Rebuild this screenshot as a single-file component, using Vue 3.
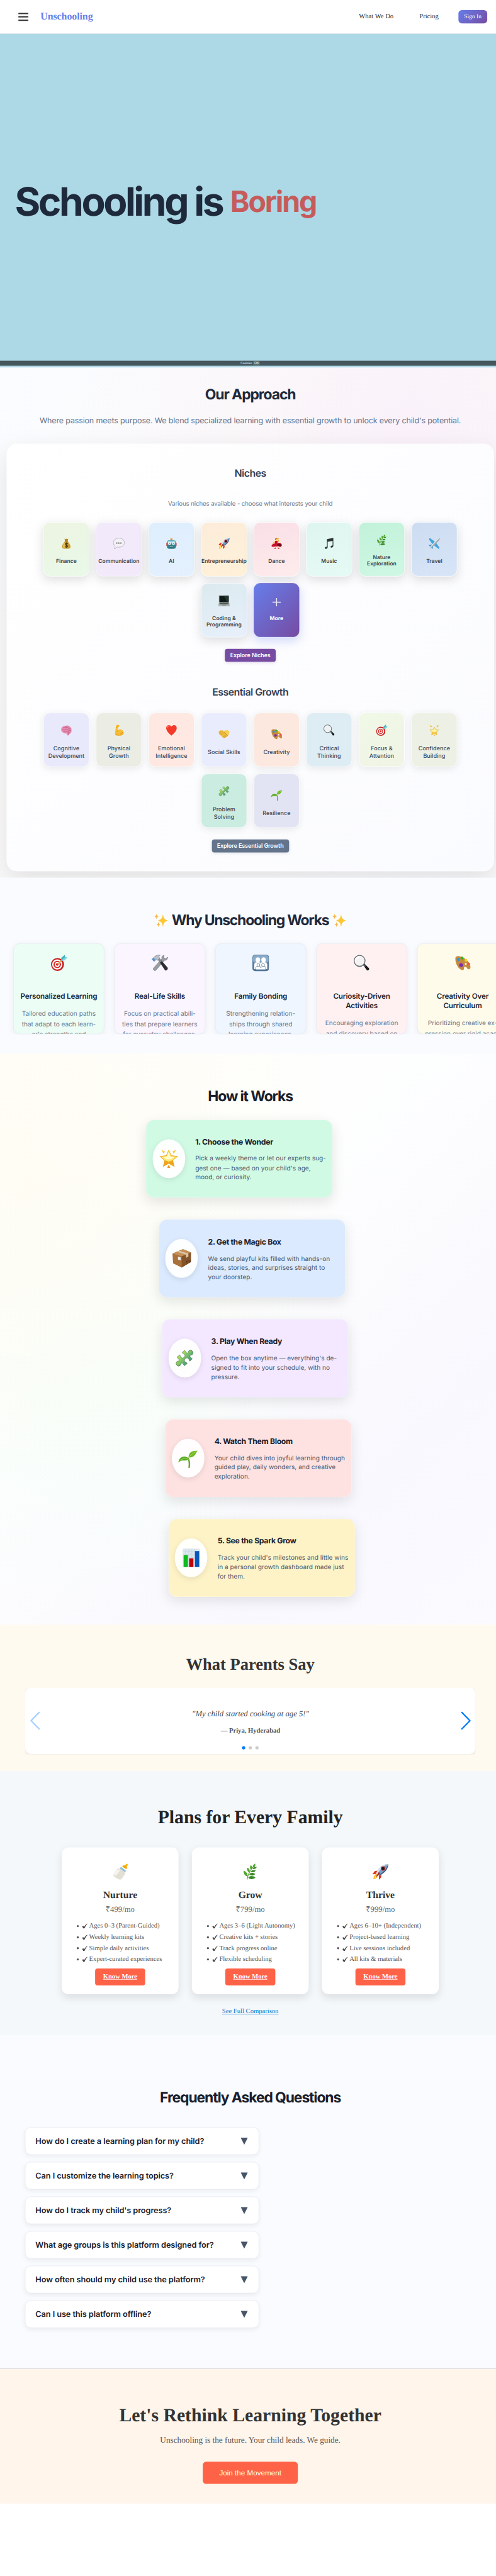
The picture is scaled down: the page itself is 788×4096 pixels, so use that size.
<script setup>
const icons = {
  money: '<path d="M11 3l3 1.500 2-1.500 2 1.500 3-1.500-1.500 6.500h-7z" fill="#b98a24"/><path d="M12.500 9h7c1 4 8 9 8 16 0 4-3 5.500-6 5.500h-11c-3 0-6-1.500-6-5.500 0-7 7-12 8-16z" fill="#c99a2e"/><path d="M13 11c-2 4-6.500 7-6.500 13 0 3 2 4 4 4 5 0 1-10 2.500-17z" fill="#e6bf55"/><path d="M12 8.500h8v2h-8z" fill="#8f6515"/><path d="M20 17.500c-1-2-7.500-2-7.500 1 0 3.500 7.500 1.500 7.500 5.200 0 3.300-7 3.300-8 .3M16 13.500v15" fill="none" stroke="#4d3a0c" stroke-width="1.800"/>',
  chat: '<path d="M16 1.500c8.500 0 15 5.500 15 12.500s-6.500 12.500-15 12.500c-2 0-3.500-.2-5-.7C9 28.500 6.500 30.500 3.500 31c1.500-2 2.200-4.500 2-7.200C2.500 21.500 1 18 1 14 1 7 7.500 1.500 16 1.500z" fill="#f4f1f6" stroke="#b0abb5" stroke-width="1.400"/><circle cx="10.500" cy="15" r="1.600" fill="#333"/><circle cx="16" cy="15" r="1.600" fill="#333"/><circle cx="21.500" cy="15" r="1.600" fill="#333"/>',
  robot: '<circle cx="16" cy="4" r="3" fill="#f7b52c"/><path d="M13 5.500h6v3h-6z" fill="#6b4aa8"/><rect x="2" y="14" width="4" height="9" rx="1.500" fill="#c23a35"/><rect x="26" y="14" width="4" height="9" rx="1.500" fill="#c23a35"/><rect x="4" y="7.500" width="24" height="23" rx="6" fill="#4fa3ad"/><path d="M4 20h24v5c0 4-3 5.500-6 5.500H10c-3 0-6-1.500-6-5.500z" fill="#2f7f8c"/><rect x="6" y="8.500" width="20" height="6" rx="3" fill="#9ad2d6"/><circle cx="10.500" cy="16" r="4" fill="#fff"/><circle cx="21.500" cy="16" r="4" fill="#fff"/><circle cx="10.500" cy="16" r="2" fill="#41c3ea"/><circle cx="21.500" cy="16" r="2" fill="#41c3ea"/><path d="M16 17l2 4h-4z" fill="#d8453c"/><path d="M11 23.500h10v3H11z" fill="#e9f5f5" stroke="#23545c" stroke-width=".8"/><path d="M13.500 23.500v3m2.500-3v3m2.500-3v3" stroke="#23545c" stroke-width=".8"/>',
  rocket: '<path d="M10 14l-5 1-4.500 6 7-.500zM18 22l-1 5.500-4 4 0-7z" fill="#e4331c"/><path d="M8 20c-3 2-5.500 6-5.500 10.500C6 30 9.500 28 12 24z" fill="#ffb21a"/><path d="M8.500 22c-2 1.500-3.500 4-3.500 6.500 2-.5 4-2 5.500-4z" fill="#fff080"/><path d="M31 1.500C22 1.500 14 6 8 18.500L13.500 24C25 18.500 31 10.500 31 1.500z" fill="#7c9fc4"/><path d="M31 1.500C22 1.500 14 6 8 18.500l2.500 2.500C16 10 22 5 31 1.500z" fill="#d5e3ee"/><path d="M31 1.500C31 10 25 18.500 13.500 24l-1.500-1.500C23 17 28 10 31 1.500z" fill="#3d608a"/><circle cx="21" cy="10" r="4.200" fill="#b8252a"/><circle cx="21" cy="10" r="2.700" fill="#1b1c26"/><path d="M13 17l2 2-6.500 7-1-1z" fill="#a3161b"/>',
  dance: '<path d="M18 2c2-2 5 0 4 2l-4 4z" fill="#f5b53a"/><circle cx="15" cy="5.500" r="3.200" fill="#f8c04a"/><path d="M11.500 5c0-4 6-5 7-1.500-2 0-5 0-5.500 4z" fill="#c47718"/><path d="M12 10l-6 4-1 5 2-.500 1-3.500 5-2zM19 10l3-4 1.500 1-3 6z" fill="#f5b53a"/><path d="M12 9h7l-.5 7c3-3 8-2 11 2 1.500 3 .5 6-2 7-4 1-5-2-9-1l-7 1c-4 0-7 1-9-1-1-4 4-7 9-8z" fill="#c9102c"/><path d="M17 18c4-2 9-1 12 0 1.500 3 .5 6-2 7-4 1-7-3-10-7z" fill="#700b1c"/><path d="M12 24l1 6h-2M19 24l2 6h2" fill="none" stroke="#eeb03a" stroke-width="2"/><path d="M9.500 30h4v1.500h-4zM20 29.500h4v1.500h-4z" fill="#b30f25"/>',
  music: '<path d="M10 4.500L27.500 1v21.500c0 3-2 5-5 5s-3.500-4 0-5.200l3-.8V9L12 11.500v14.500c0 3-2 5-5 5s-4-4-.5-5.300L10 24.500z" fill="#2e3335"/>',
  herb: '<path d="M10 31c1-9 6-18 13-26" fill="none" stroke="#5c9a35" stroke-width="1.400"/><g fill="#4fa52e"><path d="M22 8c-2-3 0-6 3.500-7.500C26 4 25.500 7 22 8zM17.500 12c-3-2-2.500-5.500-.5-8.500 3 2 3.500 6 .5 8.500zM14.500 17.500c-4-1-5-5-4.500-9 4 1 6 5 4.500 9zM11 25c-5-.5-8-5-8-11 5 1.500 8.500 6 8 11z"/></g><g fill="#3b8a2a"><path d="M20.500 10.500c.500-2.500 4-4 8-3.500-1 3-4.500 5-8 3.500zM17 16c1-3 5-4 9.500-2.500-1.500 3.500-6 4.500-9.500 2.500zM14 21c2-3 7-3.500 11.500-.500-2.500 3.500-8 4-11.500.500zM12 28c2-4 8-5 14-1-4 4-10 4.500-14 1z"/></g>',
  plane: '<path d="M19 12L4 1.500 1 4.500l10.500 14zM20 13L30.500 28l-3 3L13.500 20z" fill="#46a4dc"/><path d="M9 19l-7.500 1.500v2L7 25l2.500 5.500h2L13 23z" fill="#3b95cd"/><path d="M30.500 1.500c1.500 1.500 0 4-2 6.500L11 25.500c-3 3-6 4-6.500 3.500S5 25.500 7.500 22L24 4c2.500-2.500 5-4 6.500-2.500z" fill="#dce1e3"/><path d="M30.500 1.500c1.500 1.500 0 4-2 6.500L11 25.500c-3 3-6 4-6.500 3.500z" fill="#9ba5aa"/>',
  laptop: '<path d="M2 1h28v19H2z" fill="#87918e"/><path d="M3.500 2.200h25V18.800h-25z" fill="#101a16"/><path d="M16 2.200h12.500v16.600h-4z" fill="#26342f"/><path d="M2 20h28l2 10.500H0z" fill="#aab1ae"/><path d="M4 20.800h24l.6 4H3.400z" fill="#4b5552"/><path d="M10.500 26h11l.5 3.700h-12z" fill="#8f9895"/><path d="M0 29.800h32V31H0z" fill="#c9cecb"/>',
  brain: '<path d="M13 4c5-2.500 10-1 12.500 2 4 2 5.500 7 4.500 11 1 5-2 8-5.500 9-.5 3-3 5-5.500 4l-3-5c-3 0-6-.5-7.500-2.500C4 22 1.500 18 2 14 2 8 7 4 13 4z" fill="#e68bb0"/><path d="M8 8c3-1 4 2 7 1s5-2 6 1 5 1 7 3M4 15c3-2 6 1 9 0s4-3 7 0 6 1 9 2M8 21c3-3 6-1 9-2s5 1 8 3M20 21c2 2 2 5 1 8M14 4.500c0 2 2 3 4 2.500" fill="none" stroke="#b7557f" stroke-width="1.300"/>',
  arm: '<path d="M10 2c2-1.500 5-1 6.500 0 1.500 1.500 1 4-.5 5l-3 1.500-1 8c3-2.500 7-3.500 11-2 5 2 7 6 6.500 10-1 4-6 6-12 6-6 .5-12-.5-12-4C5 19 8 11 8 5c0-1 1-2.500 2-3z" fill="#f8bd35"/><path d="M12 16.500l1 4M12 8.500h-3M20 26c3 0 6-2 6-5M14 3.500l-3 1" fill="none" stroke="#c98614" stroke-width="1.300"/><path d="M6 26c5 3 16 4 22.500 0-2 4-6.500 4.500-12 4.500S6 30 6 26z" fill="#e79f1d"/>',
  heart: '<path d="M16 31C9 25 1.500 18 1.500 10 1.500 5 5 2 9 2c3 0 5.500 1.500 7 4.500C17.500 3.500 20 2 23 2c4 0 7.500 3 7.500 8 0 8-7.500 15-14.500 21z" fill="#f4392b"/><path d="M5 9c0-3 2.500-5 5-4.500" fill="none" stroke="#ff8a72" stroke-width="2" stroke-linecap="round"/>',
  shake: '<path d="M1 10l6-4 8 1 2 16-3 4-6-7-4-1z" fill="#e9b235"/><path d="M31 9l-6-4-8 2-6 8 3 2 5-3 7 7 3-2z" fill="#f6cf57"/><path d="M13 15l5-2.500 8 8c1 2-1 3-2 2 .5 2-1.500 3-3 2 0 2-2 3-3.500 1.500-1 2-3 1.500-4 0L7 19z" fill="#efbd3d"/><path d="M12 15.500l5-4 9 9.500M17 19l5 4M14.500 22l4 4" fill="none" stroke="#a8741a" stroke-width="1.200"/>',
  palette: '<path d="M2 8C2 3 7 2 13 4c9 3 17 11 18 19 .5 4-2 6-4 5-3-1-3-5-6-5-4 0-1 5-4 7C9 30 2 18 2 8z" fill="#c58a3e"/><circle cx="8" cy="9.500" r="3.200" fill="#2a9be0"/><circle cx="15" cy="6.500" r="2.800" fill="#27b52b"/><circle cx="22.500" cy="11" r="2.700" fill="#f5ce27"/><circle cx="27.500" cy="18" r="2.700" fill="#ee5340"/><circle cx="13" cy="20" r="3.500" fill="#7a28b8"/><ellipse cx="22" cy="18" rx="1.800" ry="2.200" fill="#fff4e0"/>',
  search: '<path d="M18 19l3-2 9 9c1.500 2-1.500 5.500-4 4z" fill="#191b1d"/><path d="M18 19l2-1.500 4 4-2 2.500z" fill="#555c60"/><circle cx="12" cy="12" r="10.500" fill="#f2f2f2" fill-opacity=".75" stroke="#5b646b" stroke-width="1.600"/><path d="M5 11c.5-4 3.500-6 7-6" fill="none" stroke="#fff" stroke-width="2"/>',
  target: '<circle cx="13.500" cy="19" r="12.500" fill="#c71f1f"/><circle cx="13" cy="19" r="9.800" fill="#fff"/><circle cx="13" cy="19" r="7.200" fill="#d62a28"/><circle cx="13" cy="19" r="4.700" fill="#fff"/><circle cx="13" cy="19" r="2.600" fill="#d62a28"/><path d="M14 18.500L25 7.500" stroke="#d29a28" stroke-width="1.600"/><path d="M20 12l1-6 6.500-5.500.5 4.500 4 .500-5 5.500z" fill="#3fb2bf"/><path d="M20 12l8-7 4 .500-5 5.500z" fill="#7fd5dc"/>',
  star: '<path d="M16 7l3.500 7 8.500 1-6 6 1.500 8L16 25l-7.500 4L10 21l-6-6 8.500-1z" fill="#f9c83a" stroke="#dca021" stroke-width=".7"/><path d="M16 9l2.800 6 6.500 1-5 4.500L16 22l-4.500-1.500L7 16l6.300-1z" fill="#fff3a5"/><path d="M5 1.500l5 4-2.500 2.500-3-3zM27 1.500l-5 4 2.500 2.500 3-3zM16 26.500l2 4.500h-4z" fill="#f3b638"/>',
  glow: '<path d="M16 1l4.200 9.500L31 12l-8 7 2.500 10.500L16 24l-9.500 5.500L9 19l-8-7 10.800-1.500z" fill="#efa41c"/><path d="M16 2.500l3.600 9 9.600 1.200-7.200 6L16 21l-6-2.300-7.200-6 9.600-1.200z" fill="#ffe96b"/><path d="M16 5l2.700 7.500 6 .8-5 3.700h-7.400l-5-3.700 6-.8z" fill="#fffbd0"/><path d="M4 1.500l6 3-2.500 3zM28 1.500l-6 3 2.500 3z" fill="#f8c737"/><path d="M16 25.500l2.500 5.500h-5z" fill="#ec9a17"/>',
  puzzle: '<defs><linearGradient id="pz" x1="0" y1="0.600" x2="1" y2="0.400"><stop offset=".1" stop-color="#a9de5a"/><stop offset=".85" stop-color="#4fa57a"/></linearGradient></defs><path transform="rotate(48 16 16) translate(-.6 -.6) scale(1.040)" d="M7 8h6.500c.5-1.500-1.500-2.500-1.500-4.500a4 4 0 0 1 8 0c0 2-2 3-1.500 4.500H25v5c-1.500.5-2.500-1-4-1a3.700 3.700 0 0 0 0 7.400c1.500 0 2.500-1.500 4-1V24h-6.500c-.5 1.500 1.500 2.500 1.500 4.500a4 4 0 0 1-8 0c0-2 2-3 1.500-4.500H7v-5.500c1.500-.5 2.500 1 4 1a3.700 3.700 0 0 0 0-7.400c-1.500 0-2.500 1.500-4 1z" fill="url(#pz)" stroke="#4b6b45" stroke-width=".6"/>',
  sprout: '<path d="M18 31c1-7 0-12-2-15" fill="none" stroke="#6ba52b" stroke-width="2.500" stroke-linecap="round"/><path d="M18 18C12 22 6 17 .5 23 1 14 12 9 18 18z" fill="#56a81e"/><path d="M17 15c0-8 6-12 15-11-4 3-3 11-15 11z" fill="#6cba25"/><path d="M3 20c4-4 9-4 14-2M18 14c4-5 8-7 12-9" fill="none" stroke="#a9dd62" stroke-width="1"/>',
  tools: '<path d="M24 1c-3 1-5 4-4 7L4 26c-1.500 3 2 6 4.500 4L25 11c3 .5 6-1.500 6-6l-4 3-3-2z" fill="#9a9ea3" stroke="#666b71" stroke-width=".8"/><path d="M12 9l3-2.500L31 25c1.500 3-2 7-5 5z" fill="#2b2d30"/><path d="M12 9l3-2.500 5 6-3.500 3z" fill="#858b91"/><path d="M1 9l4-4c3-3 7-5 12-4l-3 3 2 3-4 4-2-2-5 4z" fill="#b9c0c7" stroke="#6d7580" stroke-width=".8"/><path d="M1 9l3-3 4 4-3 3z" fill="#5a96cc"/>',
  family: '<rect width="32" height="32" rx="6" fill="#54789b"/><rect x="1" y="1" width="30" height="15" rx="5" fill="#8aaac6"/><g fill="#fff"><ellipse cx="10.500" cy="10" rx="4.300" ry="4.800"/><ellipse cx="21.500" cy="10" rx="4.300" ry="4.800"/><path d="M3.500 28V19c0-3 3-4.500 7-4.500s5.500 1 5.500 3c0-2 1.500-3 5.500-3s7 1.500 7 4.500v9z"/></g><g fill="#fff" stroke="#54789b" stroke-width="1"><path d="M6.500 29v-4c0-2 2-3 5-3s4.500 1 4.500 3 1.500-3 4.500-3 5 1 5 3v4z"/><ellipse cx="11.500" cy="20" rx="2.800" ry="3"/><ellipse cx="20.500" cy="20" rx="2.800" ry="3"/></g>',
  box: '<path d="M1 8L18 1l13 5v16L16 31 2 24z" fill="#a9713c"/><path d="M16 12.500L31 6v16l-15 9z" fill="#85532a"/><path d="M1 8l17-7 13 5-15 6.500z" fill="#c48f59"/><path d="M8 5l15 5v5l4-2V8L12 3.500z" fill="#dcc3a0"/><rect x="10" y="13.500" width="4.500" height="5" fill="#e6ecee" transform="skewY(15) translate(0 -3)"/><path d="M23 21l3-1m-1.500 0v4m3.500-5v4m2-5v4" stroke="#4d2f17" stroke-width=".9"/>',
  chart: '<path d="M2 1h28v30H2z" fill="#dce8f0"/><path d="M2 6h28M2 11h28M2 16h28M2 21h28M7 1v30M12 1v30M17 1v30M22 1v30" stroke="#bccfda" stroke-width=".6"/><path d="M3.500 11.500h7V31h-7z" fill="#0dbb1b"/><path d="M12.500 17h7v14h-7z" fill="#bd0508"/><path d="M22 5h7v26h-7z" fill="#0757be"/>',
  bottle: '<path d="M26 4c0-2 2-4 3.500-3S31 4.500 29 6l-1 4-6-4z" fill="#f7b915"/><path d="M20 6.500l8 5 1-2c1-3-5-7-7.500-5z" fill="#f2a90f"/><path d="M18 7l9 7-1.500 4L15 10z" fill="#8ebfdd"/><path d="M15 10l10.500 7c1 2 0 3-1 5l-6 8c-1.500 2-4 1.500-8-1S2 25 3 22.500l6-10c1.500-2 3-3 6-2.500z" fill="#e2dfd5"/><path d="M9.500 13C8 17 4 21 5 24c3 1 9-7 11-12.500z" fill="#f7f6f1"/>',
  sparkles: '<path d="M20 1c1.500 9 3 12 11.500 15C23 19 21.500 22 20 31c-1.500-9-3-12-11.500-15C17 13 18.500 10 20 1z" fill="#fdc82f"/><path d="M5 0c.7 4 1.500 5.300 5 6.500C6.500 7.700 5.700 9 5 13c-.7-4-1.500-5.300-5-6.500C3.500 5.300 4.300 4 5 0zM9.500 19c.6 3.500 1.500 5 4.500 6-3 1-3.900 2.500-4.500 6.500C8.900 27.500 8 26 5 25c3-1 3.900-2.500 4.500-6z" fill="#fbb84a"/>'
}
const niches = [
  ['money', 'Finance', 'c-fin'], ['chat', 'Communication', 'c-com'], ['robot', 'AI', 'c-ai'], ['rocket', 'Entrepreneurship', 'c-ent'],
  ['dance', 'Dance', 'c-dan'], ['music', 'Music', 'c-mus'], ['herb', 'Nature\nExploration', 'c-nat'], ['plane', 'Travel', 'c-tra'],
  ['laptop', 'Coding &\nProgramming', 'c-cod']
]
const growth = [
  ['brain', 'Cognitive\nDevelopment', 'g-1'], ['arm', 'Physical\nGrowth', 'g-2'], ['heart', 'Emotional\nIntelligence', 'g-3'],
  ['shake', 'Social Skills', 'g-4'], ['palette', 'Creativity', 'g-5'], ['search', 'Critical\nThinking', 'g-6'],
  ['target', 'Focus &\nAttention', 'g-7'], ['star', 'Confidence\nBuilding', 'g-8'], ['puzzle', 'Problem\nSolving', 'g-9'], ['sprout', 'Resilience', 'g-10']
]
const reasons = [
  ['target', 'Personalized Learning', 'Tailored education paths\nthat adapt to each learn-\ner\'s strengths and', 'w-1'],
  ['tools', 'Real-Life Skills', 'Focus on practical abili-\nties that prepare learners\nfor everyday challenges.', 'w-2'],
  ['family', 'Family Bonding', 'Strengthening relation-\nships through shared\nlearning experiences.', 'w-3'],
  ['search', 'Curiosity-Driven\nActivities', 'Encouraging exploration\nand discovery based on', 'w-4'],
  ['palette', 'Creativity Over\nCurriculum', 'Prioritizing creative ex-\npression over rigid acad-', 'w-5']
]
const steps = [
  ['glow', '1. Choose the Wonder', 'Pick a weekly theme or let our experts sug-\ngest one — based on your child\'s age,\nmood, or curiosity.'],
  ['box', '2. Get the Magic Box', 'We send playful kits filled with hands-on\nideas, stories, and surprises straight to\nyour doorstep.'],
  ['puzzle', '3. Play When Ready', 'Open the box anytime — everything\'s de-\nsigned to fit into your schedule, with no\npressure.'],
  ['sprout', '4. Watch Them Bloom', 'Your child dives into joyful learning through\nguided play, daily wonders, and creative\nexploration.'],
  ['chart', '5. See the Spark Grow', 'Track your child\'s milestones and little wins\nin a personal growth dashboard made just\nfor them.']
]
const plans = [
  ['bottle', 'Nurture', '499', ['Ages 0–3 (Parent-Guided)', 'Weekly learning kits', 'Simple daily activities', 'Expert-curated experiences']],
  ['herb', 'Grow', '799', ['Ages 3–6 (Light Autonomy)', 'Creative kits + stories', 'Track progress online', 'Flexible scheduling']],
  ['rocket', 'Thrive', '999', ['Ages 6–10+ (Independent)', 'Project-based learning', 'Live sessions included', 'All kits & materials']]
]
const faqs = [
  'How do I create a learning plan for my child?', 'Can I customize the learning topics?', 'How do I track my child\'s progress?',
  'What age groups is this platform designed for?', 'How often should my child use the platform?', 'Can I use this platform offline?'
]
</script>

<template>
  <div class="frame">
    <div class="page">
      <header class="nav">
        <div class="burger"><i></i><i></i><i></i></div>
        <div class="brand">Unschooling</div>
        <nav class="links">
          <a class="l1">What We Do</a>
          <a class="l2">Pricing</a>
          <a class="signin">Sign In</a>
        </nav>
      </header>

      <section class="hero">
        <h1><span class="lead">Schooling is</span><span class="boring">Boring</span></h1>
        <div class="cookies">Cookies<button>OK</button></div>
      </section>

      <section class="approach">
        <h2 class="title">Our Approach</h2>
        <p class="intro">Where passion meets purpose. We blend specialized learning with essential growth to unlock every child's potential.</p>
        <div class="panel">
          <h3 class="sub">Niches</h3>
          <p class="hint">Various niches available - choose what interests your child</p>
          <div class="tiles niches">
            <div v-for="n in niches" :key="n[1]" class="tile" :class="n[2]">
              <svg viewBox="0 0 32 32" v-html="icons[n[0]]"></svg>
              <span>{{ n[1] }}</span>
            </div>
            <div class="tile more">
              <svg viewBox="0 0 20 20"><path d="M10 0v20M0 10h20" stroke="#f0ecf8" stroke-width="2.200" /></svg>
              <span>More</span>
            </div>
          </div>
          <button class="explore purple">Explore Niches</button>
          <h3 class="sub second">Essential Growth</h3>
          <div class="tiles growth">
            <div v-for="n in growth" :key="n[1]" class="tile" :class="n[2]">
              <svg viewBox="0 0 32 32" v-html="icons[n[0]]"></svg>
              <span>{{ n[1] }}</span>
            </div>
          </div>
          <button class="explore slate">Explore Essential Growth</button>
        </div>
      </section>

      <section class="why">
        <h2 class="title why-title">
          <svg viewBox="0 0 32 32" v-html="icons.sparkles"></svg>
          <span>Why Unschooling Works</span>
          <svg viewBox="0 0 32 32" v-html="icons.sparkles"></svg>
        </h2>
        <div class="strip">
          <article v-for="r in reasons" :key="r[1]" :class="r[3]">
            <svg viewBox="0 0 32 32" v-html="icons[r[0]]"></svg>
            <h4>{{ r[1] }}</h4>
            <p>{{ r[2] }}</p>
          </article>
        </div>
      </section>

      <section class="how">
        <h2 class="title how-title">How it Works</h2>
        <div v-for="(s, i) in steps" :key="s[1]" class="step" :class="'s-' + (i + 1)">
          <div class="disc"><svg viewBox="0 0 32 32" v-html="icons[s[0]]"></svg></div>
          <div class="copy">
            <h4>{{ s[1] }}</h4>
            <p>{{ s[2] }}</p>
          </div>
        </div>
      </section>

      <section class="parents">
        <h2>What Parents Say</h2>
        <div class="slider">
          <div class="slide">
            <svg class="arrow prev" viewBox="0 0 24 44"><path d="M22 2L2.500 22 22 42" /></svg>
            <div class="words">
              <p class="quote">"My child started cooking at age 5!"</p>
              <p class="who">— Priya, Hyderabad</p>
              <div class="dots"><i class="on"></i><i></i><i></i></div>
            </div>
            <svg class="arrow next" viewBox="0 0 24 44"><path d="M2 2l19.500 20L2 42" /></svg>
          </div>
        </div>
      </section>

      <section class="plans">
        <h2>Plans for Every Family</h2>
        <div class="plan-row">
          <article v-for="p in plans" :key="p[1]">
            <svg class="pic" viewBox="0 0 32 32" v-html="icons[p[0]]"></svg>
            <h3>{{ p[1] }}</h3>
            <p class="price">₹{{ p[2] }}/mo</p>
            <ul>
              <li v-for="f in p[3]" :key="f"><i></i><svg viewBox="0 0 14 15" preserveAspectRatio="none"><path d="M.8 8.800l3-1.500 1.700 3.200C7.500 6 9.500 3 12.800.3l.8 1C10.500 5 8.300 9.500 6.500 14.600H3.800z" /></svg>{{ f }}</li>
            </ul>
            <a class="know">Know More</a>
          </article>
        </div>
        <a class="compare">See Full Comparison</a>
      </section>

      <section class="faq">
        <h2 class="title faq-title">Frequently Asked Questions</h2>
        <div class="faq-list">
          <div v-for="q in faqs" :key="q" class="q"><span>{{ q }}</span><svg viewBox="0 0 17 17"><path d="M0 0h17L8.500 17z" fill="#475569" /></svg></div>
        </div>
      </section>

      <section class="cta">
        <h2>Let's Rethink Learning Together</h2>
        <p>Unschooling is the future. Your child leads. We guide.</p>
        <button>Join the Movement</button>
      </section>
    </div>
  </div>
</template>

<style>
html, body { background: #fff; }
</style>

<style scoped>
.frame { width: 788px; height: 4096px; overflow: hidden; }
.page {
  width: 1200px; height: 6177px; transform: scale(.66274, .66311); transform-origin: 0 0; background: #fff;
  font-family: "Liberation Serif", "Times New Roman", serif; text-rendering: geometricPrecision;
}
.page *, .page { box-sizing: border-box; }
h1, h2, h3, h4, p, ul { margin: 0; padding: 0; }
button { border: 0; padding: 0; display: block; }
section { overflow: hidden; }
span { white-space: pre; }

.nav { height: 81px; background: #fff; border-bottom: 1px solid #e5e5e8; display: flex; align-items: center; padding: 0 32px 0 44px; }
.burger { width: 24px; display: flex; flex-direction: column; gap: 5px; }
.burger i { height: 3px; background: #333; border-radius: 1px; }
.brand { margin-left: 29px; font-weight: 700; font-size: 24px; line-height: 28px; letter-spacing: -.1px; color: #667eea; }
.links { margin-left: auto; display: flex; align-items: center; font-size: 16px; color: #333; }
.l1 { margin-right: 62px; }
.l2 { margin-right: 47px; }
.signin { width: 69.500px; height: 32px; line-height: 32px; text-align: center; border-radius: 8px; color: #fff; font-size: 14.400px; background: linear-gradient(135deg, #667eea, #764ba2); }

.hero { height: 800px; background: #add8e6; position: relative; padding: 352px 0 0 35.500px; }
.hero h1 { display: flex; font-family: Inter, sans-serif; font-weight: 700; line-height: 100px; }
.lead { width: 516.500px; font-size: 94px; letter-spacing: -5.200px; color: #1e293b; }
.boring { font-size: 70px; letter-spacing: -3.200px; color: #c75b5b; }
.cookies { position: absolute; left: 0; right: 0; bottom: 4px; height: 12px; background: #45565c; color: #fff; font-size: 8.300px; line-height: 12px; display: flex; justify-content: center; align-items: center; gap: 3.500px; }
.cookies button { width: 16px; height: 9.500px; border-radius: 1px; background: #5b6c72; color: #fff; font: 8px/9.500px "Liberation Sans", Arial, sans-serif; }

.title { font-family: Inter, sans-serif; font-weight: 700; font-size: 34.500px; line-height: 42px; letter-spacing: -1.600px; color: #1e293b; text-align: center; }
.approach { height: 1224px; padding: 43.500px 16px 0; text-align: center; font-family: Inter, sans-serif;
  background: radial-gradient(circle at 82% 13%, rgba(250, 240, 250, .9), rgba(250, 244, 248, .6) 25%, rgba(250, 250, 251, 0) 55%), linear-gradient(135deg, #fafcff, #fbfafa 40%, #f9f9fc); }
.intro { margin-top: 27.700px; font-size: 18.800px; line-height: 30px; letter-spacing: -.2px; color: #64748b; white-space: nowrap; }
.panel { margin-top: 39.800px; height: 1025px; border-radius: 24px; padding-top: 55px; background: linear-gradient(135deg, #fff, #fafbfe); border: 1px solid #fff; box-shadow: 0 20px 60px rgba(0, 0, 0, .1); }
.sub { font-weight: 600; font-size: 24px; line-height: 30px; letter-spacing: -.8px; color: #334155; }
.second { margin-top: 58.300px; margin-bottom: 34px; }
.hint { margin: 48.800px 0 33.200px; font-size: 14.400px; line-height: 20px; letter-spacing: -.08px; color: #64748b; }
.tiles { width: 1000px; margin: 0 auto; display: flex; flex-wrap: wrap; justify-content: center; gap: 16px; }
.tile { width: 110px; height: 130px; border-radius: 16px; border: 1px solid rgba(255, 255, 255, .7); display: flex; flex-direction: column; align-items: center; justify-content: center; text-align: center; }
.tile svg { width: 28px; height: 28px; flex: none; }
.niches .tile { box-shadow: 0 8px 24px rgba(0, 0, 0, .13); font-weight: 600; font-size: 12.800px; line-height: 15px; letter-spacing: .07px; color: #40434a; }
.niches svg { margin: 8px 0 21px; }
.growth .tile { border-color: #fff; box-shadow: 0 4px 16px rgba(0, 0, 0, .08); font-weight: 500; font-size: 13.600px; line-height: 18px; letter-spacing: .06px; color: #3b4657; }
.growth svg { margin: 10.500px 0 20.500px; }
.niches .more { background: linear-gradient(135deg, #667eea, #764ba2); border-color: rgba(255, 255, 255, .2); color: #fff; font-weight: 700; box-shadow: 0 8px 24px rgba(102, 126, 234, .3); }
.more svg { width: 20px; height: 20px; margin: 0 0 22px; }
.c-fin { background: linear-gradient(160deg, #edf4e2, #e9f9e8); }
.c-com { background: #f2e9fa; }
.c-ai { background: linear-gradient(160deg, #deeefd, #e4f0fe); }
.c-ent { background: linear-gradient(160deg, #fcecda, #fef1d8); }
.c-dan { background: linear-gradient(160deg, #f9dfe7, #feecec); }
.c-mus { background: linear-gradient(160deg, #def5ee, #e6faf5); }
.c-nat { background: linear-gradient(160deg, #c2f1d9, #cff8e4); }
.c-tra { background: linear-gradient(160deg, #cddcf0, #d8e5f9); }
.c-cod { background: linear-gradient(160deg, #dceaee, #e7f0fc); }
.g-1 { background: #e8e9fa; }
.g-2 { background: #ebede5; }
.g-3 { background: #fee8e1; }
.g-4 { background: #e9ecfc; }
.g-5 { background: #fce8df; }
.g-6 { background: #deedf3; }
.g-7 { background: linear-gradient(160deg, #f0f8e6, #f0f4e5); }
.g-8 { background: #ecf0e5; }
.g-9 { background: #cbece0; }
.g-10 { background: #e3e4f3; }
.explore { margin: 28px auto 0; height: 31px; border-radius: 6px; color: #fff; font: 600 13.600px/31px Inter, sans-serif; letter-spacing: -.15px; text-align: center; }
.purple { width: 122px; background: #764ba2; box-shadow: 0 2px 8px rgba(118, 75, 162, .2); }
.slate { width: 185px; background: #64748b; box-shadow: 0 2px 8px rgba(100, 116, 139, .2); }

.why { height: 422.300px; background: #fafbfe; padding-top: 81.500px; font-family: Inter, sans-serif; }
.why-title { display: flex; justify-content: center; align-items: center; gap: 9px; letter-spacing: -1.830px; }
.why-title svg { width: 33px; height: 33px; }
.strip { margin-top: 13.500px; height: 238px; padding: 20px 0 0 32px; overflow: hidden; display: flex; gap: 24px; }
.strip article { flex: none; width: 218px; height: 217.500px; overflow: hidden; border: 1px solid #e2e8f0; border-radius: 16px; padding-top: 26px; text-align: center; box-shadow: 0 4px 16px rgba(0, 0, 0, .06); }
.strip svg { display: block; width: 40px; height: 40px; margin: 0 auto 49px; }
.strip h4 { font-weight: 600; font-size: 17.600px; line-height: 23px; letter-spacing: -.27px; color: #1e2533; white-space: pre; }
.strip p { margin-top: 15.800px; font-size: 15.200px; line-height: 25.800px; color: #64748b; white-space: pre; }
.w-1 { background: #ecfdf5; }
.w-2 { background: #faf5ff; }
.w-3 { background: #eff6ff; }
.w-4 { background: #fff1f2; }
.w-5 { background: #fffbeb; }

.how { height: 1368.700px; padding-top: 82.200px; font-family: Inter, sans-serif;
  background: radial-gradient(circle at 5% 20%, rgba(255, 252, 240, .7), rgba(255, 252, 240, 0) 50%), radial-gradient(circle at 18% 58%, rgba(242, 255, 246, .55), rgba(242, 255, 246, 0) 45%), linear-gradient(135deg, #fffefa, #fdfefe 40%, #f9f8fe 75%, #fbfaff); }
.how-title { letter-spacing: -1.680px; color: #1a202c; margin-bottom: 33.500px; }
.step { width: 447px; height: 187.200px; margin-bottom: 52px; border-radius: 20px; border: 1px solid rgba(255, 255, 255, .4); display: flex; align-items: center; padding-left: 14.500px; box-shadow: 0 10px 30px rgba(0, 0, 0, .1); }
.s-1 { margin-left: 350px; background: #d1fae5; }
.s-2 { margin-left: 380.700px; background: #dbeafe; }
.s-3 { margin-left: 388.400px; background: #f3e8ff; }
.s-4 { margin-left: 396px; background: #fee2e2; }
.s-5 { margin-left: 403.700px; background: #fef3c7; }
.disc { flex: none; width: 78px; height: 93px; border-radius: 50%; background: rgba(255, 255, 255, .93); display: flex; align-items: center; justify-content: center; box-shadow: 0 4px 15px rgba(0, 0, 0, .1); }
.disc svg { width: 47px; height: 47px; }
.copy { margin: 3px 0 0 24.500px; }
.copy h4 { font-weight: 700; font-size: 18.400px; line-height: 26px; letter-spacing: -.45px; color: #1a202c; white-space: pre; }
.copy p { margin-top: 16px; font-size: 15.200px; line-height: 22.400px; letter-spacing: .04px; color: #475569; white-space: pre; }

.parents { height: 350.700px; background: #fffaf0; padding: 72.500px 60px 0; text-align: center; }
.parents h2 { font-size: 40px; line-height: 46px; color: #333; }
.slider { margin-top: 32.500px; height: 160px; overflow: hidden; }
.slide { height: 159px; border-radius: 16px; background: #fff; box-shadow: 0 4px 12px rgba(0, 0, 0, .08); display: flex; justify-content: space-between; padding: 0 11px 0 12px; }
.arrow { width: 24px; height: 44px; margin-top: 57.500px; fill: none; stroke: #007aff; stroke-width: 3.500; stroke-linecap: round; stroke-linejoin: round; }
.prev { opacity: .35; }
.words { padding-top: 50.800px; }
.quote { font-style: italic; font-size: 19.200px; line-height: 24px; color: #444; }
.who { margin-top: 17.800px; font-weight: 700; font-size: 16px; line-height: 20px; color: #555; }
.dots { margin-top: 27px; display: flex; gap: 8px; justify-content: center; }
.dots i { width: 8px; height: 8px; border-radius: 50%; background: #ccc; }
.dots .on { background: #007aff; }

.plans { height: 633.300px; background: #f4f8fb; padding-top: 84.200px; text-align: center; }
.plans h2 { font-size: 44.800px; line-height: 52px; color: #222; }
.plan-row { margin-top: 47.600px; display: flex; justify-content: center; gap: 32px; }
.plan-row article { width: 280px; height: 351.600px; border-radius: 16px; background: #fff; padding-top: 37.500px; box-shadow: 0 8px 20px rgba(0, 0, 0, .1); color: #555; }
.pic { display: block; width: 40px; height: 40px; margin: 0 auto; }
.plan-row h3 { margin-top: 22.900px; font-size: 23.600px; line-height: 28px; color: #333; }
.price { margin-top: 9.600px; font-size: 19.200px; line-height: 24px; color: #666; }
.plan-row ul { list-style: none; margin: 12.800px 0 8px; }
.plan-row li { display: flex; align-items: center; padding-left: 35.500px; font-size: 16px; line-height: 26.700px; height: 26.700px; white-space: nowrap; }
.plan-row li i { width: 5px; height: 5px; border-radius: 50%; background: #555; margin-right: 7.500px; }
.plan-row li svg { width: 14px; height: 12.500px; margin-right: 3.700px; fill: #444; }
.know { display: block; width: 120px; height: 41px; line-height: 41px; margin: 0 auto; border-radius: 6px; background: #ff6347; color: #fff; font-weight: 700; font-size: 16px; text-decoration: underline; }
.compare { display: block; margin-top: 31.600px; font-size: 16px; line-height: 20px; color: #0077cc; text-decoration: underline; }

.faq { height: 801px; background: #fafbfe; padding: 130px 60px 0; border-bottom: 3px solid #e3e3e1; }
.faq-title { letter-spacing: -1.660px; color: #1a202c; margin-bottom: 49.500px; }
.faq-list { width: 561px; display: flex; flex-direction: column; gap: 16.950px; }
.q { height: 66px; background: #fff; border: 1px solid #e2e8f0; border-radius: 14px; padding: 0 26px 0 24px; display: flex; align-items: center; justify-content: space-between; font: 600 19.200px/24px Inter, sans-serif; letter-spacing: -.12px; color: #1a202c; box-shadow: 0 4px 12px rgba(0, 0, 0, .06); }
.q svg { width: 17px; height: 17px; }

.cta { height: 322px; background: #fff5eb; padding-top: 83.900px; text-align: center; }
.cta h2 { font-size: 44.800px; line-height: 52px; color: #333; }
.cta p { margin-top: 22.300px; font-size: 20px; line-height: 26px; color: #555; }
.cta button { margin: 37.700px auto 0; width: 228px; height: 52.700px; border-radius: 8px; background: #ff6347; color: #fff; font: 17.600px/52.700px "Liberation Sans", Arial, sans-serif; text-align: center; }
</style>
